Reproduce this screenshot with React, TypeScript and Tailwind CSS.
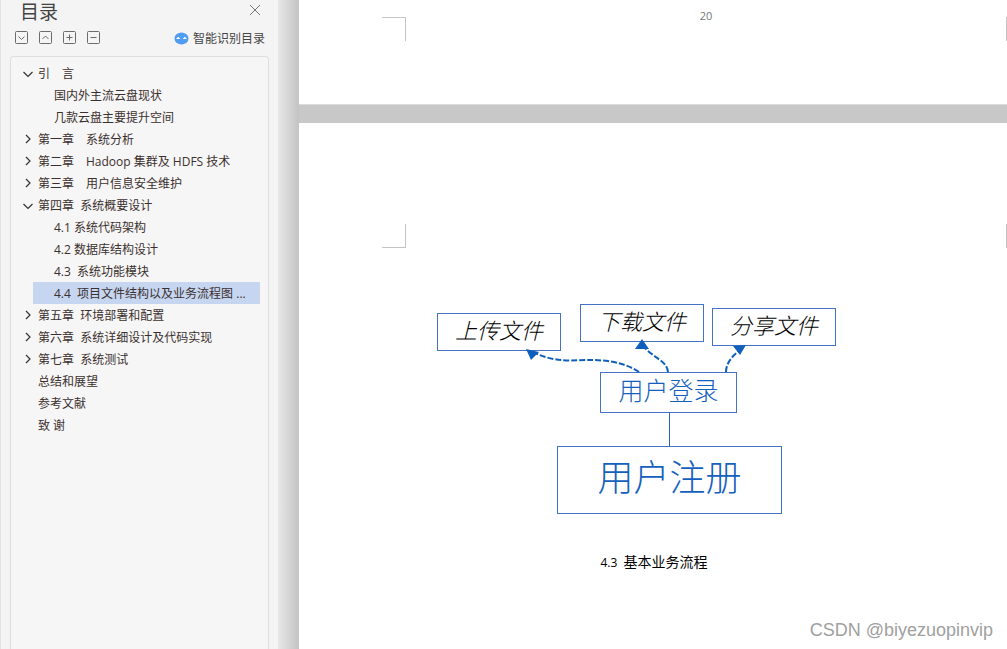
import { useState } from 'react';

type Item = {
  id: string;
  title: string;
  level: 1 | 2;
  parent?: string;
  expandable?: boolean;
};

const items: Item[] = [
  { id: 'intro', title: '引　言', level: 1, expandable: true },
  { id: 'intro-1', title: '国内外主流云盘现状', level: 2, parent: 'intro' },
  { id: 'intro-2', title: '几款云盘主要提升空间', level: 2, parent: 'intro' },
  { id: 'ch1', title: '第一章　系统分析', level: 1, expandable: true },
  { id: 'ch2', title: '第二章　Hadoop 集群及 HDFS 技术', level: 1, expandable: true },
  { id: 'ch3', title: '第三章　用户信息安全维护', level: 1, expandable: true },
  { id: 'ch4', title: '第四章  系统概要设计', level: 1, expandable: true },
  { id: 'ch4-1', title: '4.1 系统代码架构', level: 2, parent: 'ch4' },
  { id: 'ch4-2', title: '4.2 数据库结构设计', level: 2, parent: 'ch4' },
  { id: 'ch4-3', title: '4.3  系统功能模块', level: 2, parent: 'ch4' },
  { id: 'ch4-4', title: '4.4  项目文件结构以及业务流程图 ...', level: 2, parent: 'ch4' },
  { id: 'ch5', title: '第五章  环境部署和配置', level: 1, expandable: true },
  { id: 'ch6', title: '第六章  系统详细设计及代码实现', level: 1, expandable: true },
  { id: 'ch7', title: '第七章  系统测试', level: 1, expandable: true },
  { id: 'summary', title: '总结和展望', level: 1 },
  { id: 'refs', title: '参考文献', level: 1 },
  { id: 'thanks', title: '致 谢', level: 1 },
];

const tools = [
  { label: '展开', d: 'M4.500 6.500l3 3 3-3' },
  { label: '收起', d: 'M4.500 9l3-3 3 3' },
  { label: '增加级别', d: 'M4.500 7.500h6M7.500 4.500v6' },
  { label: '减少级别', d: 'M4.500 7.500h6' },
];

const Sidebar = () => {
  const [open, setOpen] = useState<string[]>(['intro', 'ch4']);
  const [selected, setSelected] = useState('ch4-4');

  const toggle = (id: string) => {
    setOpen((prev) => (prev.includes(id) ? prev.filter((v) => v !== id) : [...prev, id]));
  };

  const visible = items.filter((item) => !item.parent || open.includes(item.parent));

  return (
    <aside className="w-[278px] shrink-0 flex flex-col bg-[#f4f4f4] border-l border-[#e2e2e2] px-[9px]">
      <div className="flex items-center justify-between h-[23px] pl-[10px] pr-2">
        <h2 className="text-[19px] leading-6 text-[#444]">目录</h2>
        <button aria-label="关闭" className="pb-1 text-[#777]">
          <svg width="12" height="12" viewBox="0 0 12 12" fill="none" stroke="currentColor">
            <path d="M1 1l10 10M11 1L1 11" />
          </svg>
        </button>
      </div>

      {/* 工具栏 */}
      <div className="flex items-center justify-between h-[29px] pl-1 pr-1">
        <div className="flex gap-[9px]">
          {tools.map((tool) => (
            <button key={tool.label} aria-label={tool.label} className="text-[#6b6b6b]">
              <svg width="15" height="15" viewBox="0 0 15 15" fill="none" stroke="currentColor">
                <rect x="1.5" y="1.5" width="12" height="12" rx="1" />
                <path d={tool.d} />
              </svg>
            </button>
          ))}
        </div>
        <button className="flex items-center gap-1 pt-0.5 text-xs text-[#444]">
          <svg width="15" height="13" viewBox="0 0 15 13">
            <path
              d="M4.500 1.200C6.300.3 8.700.3 10.500 1.200 13 1.800 14.500 4 14.500 6.500s-1.500 4.700-4 5.300c-1.800.9-4.200.9-6 0C2 11.200.5 9 .5 6.500s1.500-4.700 4-5.300z"
              fill="#4f9cf3"
            />
            <path d="M2 7l2.200-2.300L6.400 7zM8.600 7l2.200-2.300L13 7z" fill="#fff" />
          </svg>
          智能识别目录
        </button>
      </div>

      {/* 目录树 */}
      <nav className="flex-1 mt-1 pt-[5px] px-2 bg-[#f6f6f6] border border-b-0 border-[#dedede] rounded-t">
        <ul>
          {visible.map((item) => (
            <li key={item.id} className="flex h-[22px]">
              <span className="w-[14px] shrink-0 flex items-center justify-end">
                {item.expandable && (
                  <button
                    aria-label={item.title}
                    aria-expanded={open.includes(item.id)}
                    className="text-[#333]"
                    onClick={() => toggle(item.id)}
                  >
                    <svg width="11" height="11" viewBox="0 0 11 11" fill="none" stroke="currentColor" strokeWidth="1.2">
                      <path d={open.includes(item.id) ? 'M1.500 4l4.500 4.500L10.500 4' : 'M4 1l4 4-4 4'} />
                    </svg>
                  </button>
                )}
              </span>
              <button
                className={`flex-1 pt-0.5 rounded-[1px] text-left text-xs leading-5 whitespace-pre text-[#3b302e] ${
                  item.level === 2 ? 'pl-[21px]' : 'pl-[5px]'
                } ${item.id === selected ? 'bg-[#c6d6f1]' : ''}`}
                onClick={() => setSelected(item.id)}
              >
                {item.title}
              </button>
            </li>
          ))}
        </ul>
      </nav>
    </aside>
  );
};

const nodeBase = 'absolute flex items-center justify-center border border-[#4472c4] bg-white whitespace-nowrap';

const FlowChart = () => (
  <figure className="w-[398px] ml-[31px]">
    <div className="relative h-[210px] font-light">
      <div className={`${nodeBase} left-0 top-[9px] w-[124px] h-[38px] pb-1 text-[22px] italic text-black`}>上传文件</div>
      <div className={`${nodeBase} left-[143px] top-0 w-[124px] h-[38px] pb-1 text-[22px] italic text-black`}>下载文件</div>
      <div className={`${nodeBase} left-[275px] top-1 w-[124px] h-[38px] pb-1 text-[22px] italic text-black`}>分享文件</div>
      <div className={`${nodeBase} left-[163px] top-[68px] w-[137px] h-[41px] pb-1 text-[25px] text-[#1460bd]`}>用户登录</div>
      <div className={`${nodeBase} left-[120px] top-[142px] w-[225px] h-[68px] pb-1 text-4xl text-[#1460bd]`}>用户注册</div>
      <svg className="absolute left-0 top-0" width="398" height="210" viewBox="0 0 398 210" fill="none">
        <path d="M232.500 109v33" stroke="#2a62b8" />
        <g stroke="#0f5fbd" strokeWidth="2" strokeDasharray="6 2">
          <path d="M202 68C187 58 169 56 153 56S119 59 98 49" />
          <path d="M231 68C230 57 217 54 208 44" />
          <path d="M289 68C289 60 294 53 302 47" />
        </g>
        <g fill="#0f5fbd">
          <path d="M89 45l13 3-8 8z" />
          <path d="M205 35l-7 10h14z" />
          <path d="M296 42l13-1-6 10z" />
        </g>
      </svg>
    </div>
    <figcaption className="mt-9 pl-9 text-center text-sm leading-6 whitespace-pre text-black">
      <span className="text-xs">4.3  </span>基本业务流程
    </figcaption>
  </figure>
);

const App = () => {
  return (
    <div className="min-h-screen flex overflow-hidden font-['Open_Sans','Noto_Sans_CJK_SC',sans-serif]">
      <Sidebar />
      <div className="w-[21px] shrink-0 bg-linear-to-r from-[#e8e8e8] to-[#c3c3c3]" />

      <main className="relative flex-1 flex flex-col bg-[#c8c8c8]">
        {/* 上一页的页脚 */}
        <section className="h-[105px] flex items-start pl-[83px] pt-[17px] bg-white border-b border-[#dcdcdc]">
          <div className="size-6 border-t border-r border-[#c4c4c4]" />
          <p className="flex-1 -mt-[9px] text-center text-[11px] leading-4 text-[#777]">20</p>
          <div className="w-px h-6 bg-[#c4c4c4]" />
        </section>

        <section className="flex-1 mt-[18px] pt-[101px] bg-white">
          <div className="flex justify-between pl-[83px]">
            <div className="size-6 border-b border-r border-[#c4c4c4]" />
            <div className="w-px h-6 bg-[#c4c4c4]" />
          </div>
          <div className="pl-[107px] pt-14">
            <FlowChart />
          </div>
        </section>

        <p className="absolute right-[14px] bottom-[7px] text-lg leading-6 text-[#a0a0a0] font-['Liberation_Sans',sans-serif]">
          CSDN @biyezuopinvip
        </p>
      </main>
    </div>
  );
};

export default App;
